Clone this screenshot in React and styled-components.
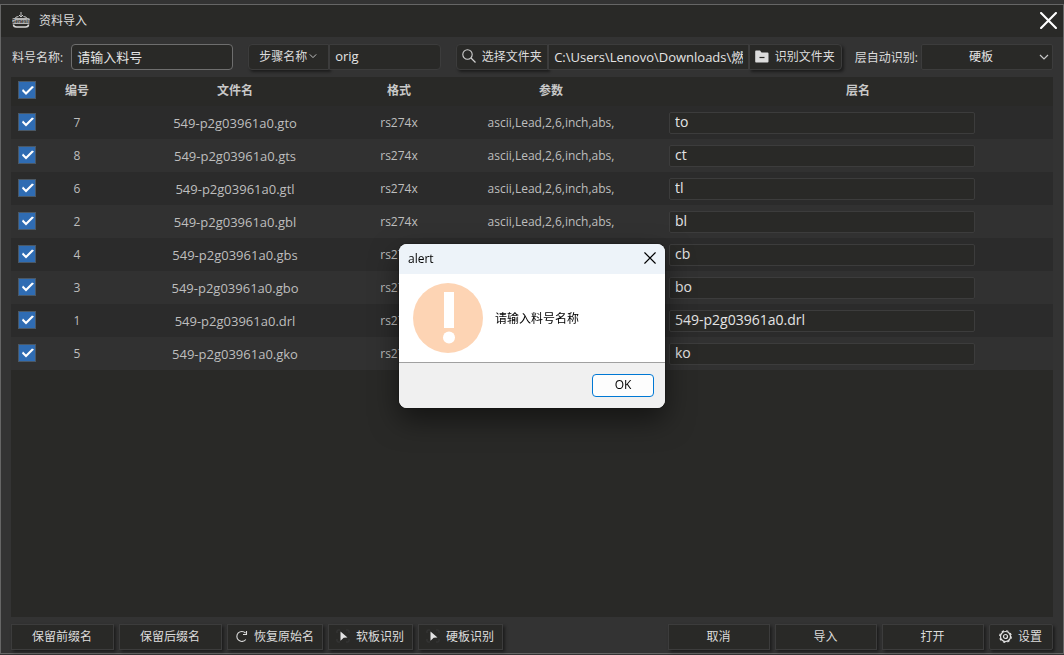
import React from "react";
import styled, { createGlobalStyle, css } from "styled-components";

//styled components

const GlobalStyle = createGlobalStyle`
  * {
    box-sizing: border-box;
  }
  body {
    margin: 0;
    background-color: #333333;
  }
  body, button, input, select {
    font-family: "Open Sans", "Noto Sans CJK SC", sans-serif;
    font-size: 12px;
  }
`;

const Page = styled.div`
  display: flex;
  flex-direction: column;
  min-height: 100vh;
  padding: 4px 0 1px;
  color: #dcdcdc;
`;

const Window = styled.main`
  flex: 1;
  display: flex;
  flex-direction: column;
  border: 1px solid #666666;
  background-color: #333333;
`;

const TitleBar = styled.header`
  display: flex;
  align-items: center;
  height: 32px;
  padding: 0 6px 2px 10px;
  background-color: #292927;
`;

const Title = styled.h1`
  flex: 1;
  margin: 0 0 0 8px;
  font-size: 12px;
  font-weight: 400;
`;

const IconButton = styled.button`
  display: flex;
  padding: 0;
  border: none;
  background: none;
  color: ${(props) => props.$color};
  cursor: pointer;
`;

const Toolbar = styled.div`
  display: flex;
  align-items: center;
  height: 40px;
  padding: 0 10px 0 11px;
`;

const Field = styled.div`
  display: flex;
  align-items: center;
  flex: ${(props) => (props.$grow ? 1 : "none")};
  min-width: 0;
  margin-right: ${(props) => props.$gap || 0}px;
`;

const FieldLabel = styled.label`
  white-space: nowrap;
  margin-right: ${(props) => props.$gap || 0}px;
`;

const box = css`
  height: 26px;
  border: 1px solid #3c3c3c;
  background-color: #292927;
  color: #e4e4e4;
`;

const TextInput = styled.input`
  ${box}
  width: ${(props) => props.$width || "100%"};
  min-width: 0;
  padding: 0 5px 2px;
  border-color: ${(props) => (props.$active ? "#6e6e6e" : "#3c3c3c")};
  border-radius: ${(props) => props.$radius || "4px"};
  font-size: 13px;
  outline: none;
`;

const Button = styled.button`
  ${box}
  display: flex;
  flex: none;
  align-items: center;
  justify-content: center;
  gap: ${(props) => props.$gap || 6}px;
  width: ${(props) => props.$width}px;
  padding: 0 1px 2px 0;
  border-radius: ${(props) => props.$radius || "0"};
  box-shadow: 2px 2px 3px rgba(0, 0, 0, 0.45);
  color: #dcdcdc;
  white-space: nowrap;
  cursor: pointer;
`;

const SelectBox = styled.div`
  position: relative;
  width: 132px;
  svg {
    position: absolute;
    right: 4px;
    top: 10px;
    pointer-events: none;
  }
`;

const Select = styled.select`
  ${box}
  width: 100%;
  padding: 0 16px 2px 4px;
  border-radius: 2px;
  appearance: none;
  text-align-last: center;
`;

const Content = styled.section`
  flex: 1;
  margin: 0 10px;
  background-color: #292927;
`;

const Table = styled.table`
  width: 100%;
  border-collapse: collapse;
  table-layout: fixed;
`;

const Col = styled.col`
  width: ${(props) => props.$width}px;
`;

const HeadRow = styled.tr`
  height: 29px;
`;

const Row = styled.tr`
  height: 33px;
  background-color: #2b2b2b;
  &:nth-child(even) {
    background-color: #313131;
  }
`;

const Th = styled.th`
  padding: 0 0 3px;
  color: #c8c8c8;
  font-weight: 600;
`;

const Td = styled.td`
  padding: 0;
  color: #bebebe;
  font-size: ${(props) => props.$size || 12}px;
  text-align: center;
`;

const CheckTd = styled.td`
  padding: 0 0 2px;
`;

const LayerTd = styled.td`
  padding: 0 6px;
`;

const LayerInput = styled(TextInput)`
  display: block;
  width: 81%;
  height: 22px;
  border-radius: 2px;
  font-size: 14px;
`;

const Checkbox = styled.input`
  display: block;
  width: 18px;
  height: 18px;
  margin: 0 auto;
  border: 1px solid #4a5866;
  background-color: #303030;
  appearance: none;
  &:checked {
    background-color: #2f6cb3;
  }
  &:checked::after {
    content: "";
    display: block;
    width: 16px;
    height: 16px;
    background-color: #ffffff;
    clip-path: polygon(
      3px 9px,
      4px 7px,
      7px 10px,
      13px 4px,
      15px 5px,
      7px 13px
    );
  }
`;

const Footer = styled.footer`
  display: flex;
  gap: 5px;
  padding: 7px 10px 3px;
`;

const Spacer = styled.div`
  flex: 1;
`;

const Overlay = styled.div`
  position: fixed;
  inset: 0;
  display: flex;
  align-items: center;
  justify-content: center;
  padding-bottom: 3px;
`;

const Dialog = styled.div`
  width: 266px;
  overflow: hidden;
  border-radius: 8px;
  background-color: #ffffff;
  box-shadow: 0 12px 28px rgba(0, 0, 0, 0.5), 0 0 2px rgba(0, 0, 0, 0.6);
  color: #000000;
`;

const DialogTitle = styled.div`
  display: flex;
  align-items: center;
  justify-content: space-between;
  height: 30px;
  padding: 0 9px 2px;
  background-color: #edf3f9;
`;

const DialogBody = styled.div`
  display: flex;
  align-items: center;
  gap: 12px;
  height: 88px;
  padding: 0 14px;
`;

const DialogFooter = styled.div`
  display: flex;
  justify-content: flex-end;
  height: 46px;
  padding: 11px;
  border-top: 1px solid #a0a0a0;
  background-color: #f0f0f0;
`;

const OkButton = styled.button`
  width: 62px;
  height: 23px;
  padding: 0 0 2px;
  border: 1px solid #0078d4;
  border-radius: 4px;
  background-color: #fdfdfd;
  color: #000000;
`;

//icons

const Logo = () => (
  <svg width="20" height="18" viewBox="0 0 20 18" fill="none">
    <path d="M10 1v5M8 4l2 2 2-2" stroke="#c8c8c8" />
    <path d="M3.500 8q1-2.500 4-2.500M16.500 8q-1-2.500-4-2.500" stroke="#c8c8c8" />
    <path d="M2.500 13.500q0 2.500 3 2.500h9q3 0 3-2.500" stroke="#d8d8d8" strokeWidth="1.500" />
    <rect x="1" y="7" width="18" height="6" rx="2" fill="#b4b4b4" />
    <text
      x="10"
      y="12"
      fill="#292927"
      fontSize="5"
      fontWeight="700"
      fontFamily="Liberation Sans, sans-serif"
      textAnchor="middle"
    >
      Genesis
    </text>
  </svg>
);

const Cross = ({ size, weight }) => (
  <svg width={size} height={size} viewBox="0 0 16 16" fill="none">
    <path
      d="M1 1l14 14M15 1L1 15"
      stroke="currentColor"
      strokeWidth={weight}
      strokeLinecap="round"
    />
  </svg>
);

const Chevron = ({ size }) => (
  <svg width={size} height="6" viewBox="0 0 10 6" fill="none">
    <path d="M1 1l4 4 4-4" stroke="#c8c8c8" strokeWidth="1.200" />
  </svg>
);

const SearchIcon = () => (
  <svg width="14" height="14" viewBox="0 0 14 14" fill="none">
    <circle cx="5.500" cy="5.500" r="4.700" stroke="#d0d0d0" strokeWidth="1.100" />
    <path d="M9 9l4.500 4.500" stroke="#d0d0d0" strokeWidth="1.200" />
  </svg>
);

const FolderIcon = () => (
  <svg width="14" height="13" viewBox="0 0 14 13">
    <path d="M1 0.500h4l1.500 2H12.500q1 0 1 1V11.500q0 1-1 1H1q-.8 0-.8-1V1.500q0-1 .8-1z" fill="#dcdcdc" />
    <path d="M4.500 7.500h5" stroke="#292927" strokeWidth="1.200" />
  </svg>
);

const RestoreIcon = () => (
  <svg width="13" height="13" viewBox="0 0 13 13" fill="none">
    <path d="M10.500 3A5 5 0 1 0 10.800 9.500" stroke="#dcdcdc" strokeWidth="1.100" />
    <path d="M11.500 1v3.500H8" stroke="#dcdcdc" strokeWidth="1.100" />
  </svg>
);

const PointerIcon = () => (
  <svg width="14" height="14" viewBox="0 0 14 14" fill="none">
    <path
      d="M1 4V2q0-1 1-1h2M10 1h2q1 0 1 1v2M13 10v2q0 1-1 1h-2M4 13H2q-1 0-1-1v-2"
      stroke="#383838"
    />
    <path d="M4.500 2.500l7 6-3.800.3-3.200 3z" fill="#e4e4e4" />
  </svg>
);

const GearIcon = () => (
  <svg width="13" height="13" viewBox="0 0 13 13" fill="none" stroke="#e4e4e4">
    <circle cx="6.500" cy="6.500" r="5" strokeWidth="1.200" />
    <circle cx="6.500" cy="6.500" r="5.800" strokeWidth="1.200" strokeDasharray="2.300 2.255" />
    <circle cx="6.500" cy="6.500" r="2" strokeWidth="1.200" />
  </svg>
);

const WarningIcon = () => (
  <svg width="70" height="70" viewBox="0 0 70 70">
    <circle cx="35" cy="35" r="35" fill="#fdd4b4" />
    <rect x="31" y="9" width="10" height="36" fill="#ffffff" />
    <circle cx="36" cy="54.500" r="6" fill="#ffffff" />
  </svg>
);

const files = [
  { id: 7, name: "549-p2g03961a0.gto", layer: "to" },
  { id: 8, name: "549-p2g03961a0.gts", layer: "ct" },
  { id: 6, name: "549-p2g03961a0.gtl", layer: "tl" },
  { id: 2, name: "549-p2g03961a0.gbl", layer: "bl" },
  { id: 4, name: "549-p2g03961a0.gbs", layer: "cb" },
  { id: 3, name: "549-p2g03961a0.gbo", layer: "bo" },
  { id: 1, name: "549-p2g03961a0.drl", layer: "549-p2g03961a0.drl" },
  { id: 5, name: "549-p2g03961a0.gko", layer: "ko" },
];

const FileTable = () => {
  return (
    <Table>
      <colgroup>
        <Col $width={32} />
        <Col $width={68} />
        <Col $width={248} />
        <Col $width={80} />
        <Col $width={224} />
        <col />
      </colgroup>
      <thead>
        <HeadRow>
          <Th>
            <Checkbox type="checkbox" defaultChecked aria-label="全选" />
          </Th>
          <Th>编号</Th>
          <Th>文件名</Th>
          <Th>格式</Th>
          <Th>参数</Th>
          <Th>层名</Th>
        </HeadRow>
      </thead>
      <tbody>
        {files.map((file) => (
          <Row key={file.id}>
            <CheckTd>
              <Checkbox type="checkbox" defaultChecked aria-label={file.name} />
            </CheckTd>
            <Td>{file.id}</Td>
            <Td $size={13}>{file.name}</Td>
            <Td>rs274x</Td>
            <Td>ascii,Lead,2,6,inch,abs,</Td>
            <LayerTd>
              <LayerInput
                defaultValue={file.layer}
                aria-label={`层名 ${file.id}`}
              />
            </LayerTd>
          </Row>
        ))}
      </tbody>
    </Table>
  );
};

const Alert = () => {
  return (
    <Overlay>
      <Dialog role="alertdialog" aria-labelledby="alert-title">
        <DialogTitle>
          <span id="alert-title">alert</span>
          <IconButton $color="#000000" aria-label="关闭提示">
            <Cross size={12} weight="1.500" />
          </IconButton>
        </DialogTitle>
        <DialogBody>
          <WarningIcon />
          <span>请输入料号名称</span>
        </DialogBody>
        <DialogFooter>
          <OkButton>OK</OkButton>
        </DialogFooter>
      </Dialog>
    </Overlay>
  );
};

const App = () => {
  return (
    <Page>
      <GlobalStyle />
      <Window>
        <TitleBar>
          <Logo />
          <Title>资料导入</Title>
          <IconButton $color="#ffffff" aria-label="关闭">
            <Cross size={17} weight="2" />
          </IconButton>
        </TitleBar>
        <Toolbar>
          <Field $gap={15}>
            <FieldLabel htmlFor="job" $gap={8}>
              料号名称:
            </FieldLabel>
            <TextInput id="job" $width="162px" $active defaultValue="请输入料号" />
          </Field>
          <Field $gap={15}>
            <Button $width={81} $gap={2} $radius="4px 0 0 4px">
              步骤名称
              <Chevron size={8} />
            </Button>
            <TextInput
              $width="112px"
              $radius="0 4px 4px 0"
              defaultValue="orig"
              aria-label="步骤名称"
            />
          </Field>
          <Field $grow $gap={13}>
            <Button $width={92} $radius="4px 0 0 4px">
              <SearchIcon />
              选择文件夹
            </Button>
            <TextInput
              $radius="0"
              defaultValue="C:\Users\Lenovo\Downloads\燃气"
              aria-label="文件夹路径"
            />
            <Button $width={93} $radius="0 4px 4px 0">
              <FolderIcon />
              识别文件夹
            </Button>
          </Field>
          <Field>
            <FieldLabel htmlFor="auto" $gap={3}>
              层自动识别:
            </FieldLabel>
            <SelectBox>
              <Select id="auto" defaultValue="硬板">
                <option>硬板</option>
                <option>软板</option>
              </Select>
              <Chevron size={10} />
            </SelectBox>
          </Field>
        </Toolbar>
        <Content>
          <FileTable />
        </Content>
        <Footer>
          <Button $width={103}>保留前缀名</Button>
          <Button $width={103}>保留后缀名</Button>
          <Button $width={96}>
            <RestoreIcon />
            恢复原始名
          </Button>
          <Button $width={85}>
            <PointerIcon />
            软板识别
          </Button>
          <Button $width={85}>
            <PointerIcon />
            硬板识别
          </Button>
          <Spacer />
          <Button $width={102}>取消</Button>
          <Button $width={102}>导入</Button>
          <Button $width={102}>打开</Button>
          <Button $width={64} $radius="2px">
            <GearIcon />
            设置
          </Button>
        </Footer>
      </Window>
      <Alert />
    </Page>
  );
};

export default App;
